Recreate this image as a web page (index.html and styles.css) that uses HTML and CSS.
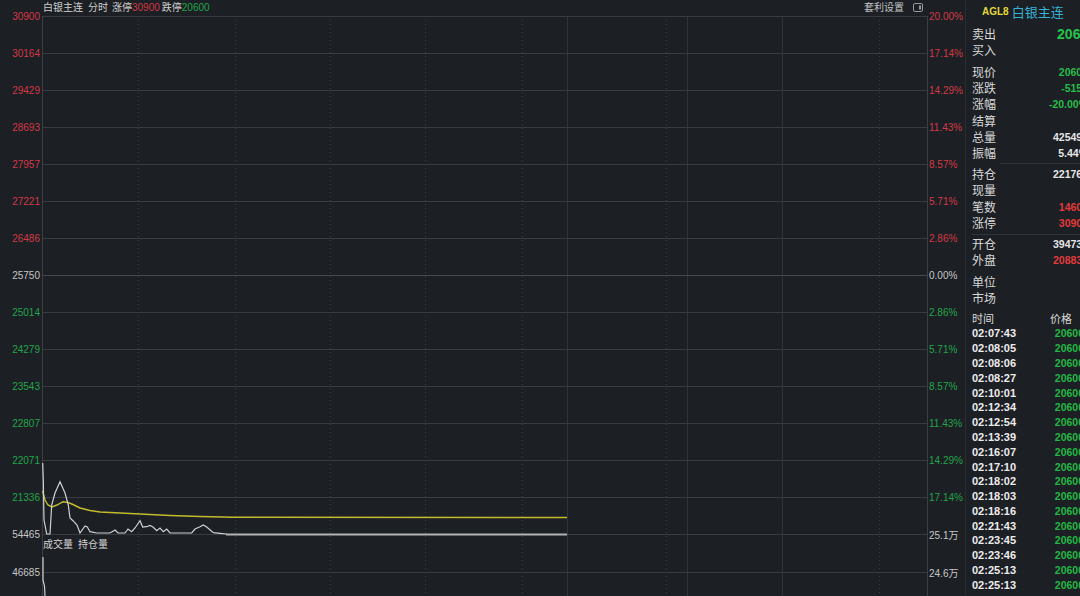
FILE: index.html
```html
<!doctype html>
<html lang="zh-CN">
  <head>
    <meta charset="UTF-8" />
    <title>白银主连 分时</title>
    <link rel="stylesheet" href="styles.css">
  </head>
  <body>
    <div class="screen">
      <section class="main">
        <header class="topbar">
          <div class="title">
            <span class="name">白银主连</span>
            <span class="mode">分时</span>
            <span>涨停</span><span class="up">30900</span>
            <span class="lim">跌停</span><span class="down">20600</span>
          </div>
          <div class="tools">
            <span>套利设置</span>
            <svg class="toggle" width="10" height="9" viewBox="0 0 10 9">
              <rect x="0.5" y="0.5" width="9" height="8" rx="1.5" fill="none" stroke="#9a9a9a" />
              <rect x="6" y="2.5" width="2" height="4" fill="#9a9a9a" />
            </svg>
          </div>
        </header>

        <svg class="chart" width="965" height="581" viewBox="0 15 965 581">
          <!-- vertical grid -->
          <line class="grid-dot" x1="138.5" y1="16" x2="138.5" y2="596" />
          <line class="grid-dot" x1="235.5" y1="16" x2="235.5" y2="596" />
          <line class="grid-dot" x1="330.5" y1="16" x2="330.5" y2="596" />
          <line class="grid-dot" x1="425.5" y1="16" x2="425.5" y2="596" />
          <line class="grid-dot" x1="522.5" y1="16" x2="522.5" y2="596" />
          <line class="grid-dot" x1="666.5" y1="16" x2="666.5" y2="596" />
          <line class="grid-dot" x1="879.5" y1="16" x2="879.5" y2="596" />
          <line class="grid-v" x1="567.5" y1="16" x2="567.5" y2="596" />
          <line class="grid-v" x1="687.5" y1="16" x2="687.5" y2="596" />
          <line class="grid-v" x1="782.5" y1="16" x2="782.5" y2="596" />

          <!-- horizontal grid -->
          <line class="grid-h" x1="42" y1="16.5" x2="927" y2="16.5" />
          <line class="grid-h" x1="42" y1="53.5" x2="927" y2="53.5" />
          <line class="grid-h" x1="42" y1="90.5" x2="927" y2="90.5" />
          <line class="grid-h" x1="42" y1="127.5" x2="927" y2="127.5" />
          <line class="grid-h" x1="42" y1="164.5" x2="927" y2="164.5" />
          <line class="grid-h" x1="42" y1="201.5" x2="927" y2="201.5" />
          <line class="grid-h" x1="42" y1="238.5" x2="927" y2="238.5" />
          <line class="grid-h mid" x1="42" y1="275.5" x2="927" y2="275.5" />
          <line class="grid-h" x1="42" y1="312.5" x2="927" y2="312.5" />
          <line class="grid-h" x1="42" y1="349.5" x2="927" y2="349.5" />
          <line class="grid-h" x1="42" y1="386.5" x2="927" y2="386.5" />
          <line class="grid-h" x1="42" y1="423.5" x2="927" y2="423.5" />
          <line class="grid-h" x1="42" y1="460.5" x2="927" y2="460.5" />
          <line class="grid-h" x1="42" y1="497.5" x2="927" y2="497.5" />
          <line class="grid-h" x1="42" y1="534.5" x2="927" y2="534.5" />
          <line class="grid-h" x1="42" y1="572.5" x2="927" y2="572.5" />

          <!-- axes -->
          <line class="axis" x1="42.5" y1="16" x2="42.5" y2="596" />
          <line class="axis" x1="927.5" y1="16" x2="927.5" y2="596" />

          <!-- left price scale -->
          <g class="ax ax-l">
            <text class="up" x="40" y="16">30900</text>
            <text class="up" x="40" y="53">30164</text>
            <text class="up" x="40" y="90">29429</text>
            <text class="up" x="40" y="127">28693</text>
            <text class="up" x="40" y="164">27957</text>
            <text class="up" x="40" y="201">27221</text>
            <text class="up" x="40" y="238">26486</text>
            <text class="flat" x="40" y="275">25750</text>
            <text class="down" x="40" y="312">25014</text>
            <text class="down" x="40" y="349">24279</text>
            <text class="down" x="40" y="386">23543</text>
            <text class="down" x="40" y="423">22807</text>
            <text class="down" x="40" y="460">22071</text>
            <text class="down" x="40" y="497">21336</text>
            <text class="flat" x="40" y="534">54465</text>
            <text class="flat" x="40" y="572">46685</text>
          </g>

          <!-- right percent scale -->
          <g class="ax ax-r">
            <text class="up" x="929" y="16">20.00%</text>
            <text class="up" x="929" y="53">17.14%</text>
            <text class="up" x="929" y="90">14.29%</text>
            <text class="up" x="929" y="127">11.43%</text>
            <text class="up" x="929" y="164">8.57%</text>
            <text class="up" x="929" y="201">5.71%</text>
            <text class="up" x="929" y="238">2.86%</text>
            <text class="flat" x="929" y="275">0.00%</text>
            <text class="down" x="929" y="312">2.86%</text>
            <text class="down" x="929" y="349">5.71%</text>
            <text class="down" x="929" y="386">8.57%</text>
            <text class="down" x="929" y="423">11.43%</text>
            <text class="down" x="929" y="460">14.29%</text>
            <text class="down" x="929" y="497">17.14%</text>
            <text class="flat" x="929" y="535">25.1万</text>
            <text class="flat" x="929" y="573">24.6万</text>
          </g>

          <!-- average price -->
          <polyline class="avg" points="42.5,490.7 45,500 48,505 52,507 57,505 63,501.7 68,502.5 73,504.5 80,508 90,510.5 100,512 120,513 140,514 170,515.5 200,516.5 233,517.3 567,517.5" />

          <!-- price -->
          <polyline class="price" points="42.7,463 43.3,480 44,520 46.7,534 50,534 51.7,505 55,493 60,481.7 65,493 68.3,505 70,518 73,520.7 77,525 80,533 85,526 87.3,527 90,531.7 96.7,533 110,533 115,530 118,533 125,533 128,529 131.7,531.7 135,528 140,520.7 142.7,527 146.7,526.7 150,525.5 153,527 156.7,530.7 160,528 163.3,531.7 166.7,529 170,533 191.7,533 195,529 200,526.7 203.3,525 206.7,527 213.3,532.7 220,533.3 226.7,534" />
          <line class="price-flat" x1="226" y1="534.5" x2="567" y2="534.5" />

          <!-- volume -->
          <polyline class="price" points="43,557 43,580 44.5,586 45,596" />

          <text class="legend" x="43" y="543">成交量</text>
          <text class="legend" x="78" y="543">持仓量</text>
        </svg>
      </section>

      <aside class="quote">
        <div class="quote-head">
          <span class="code">AGL8</span>
          <span class="cn-name">白银主连</span>
        </div>

        <div class="group g1">
          <div class="row"><span class="k">卖出</span><span class="v big down">20600</span></div>
          <div class="row"><span class="k">买入</span><span class="v"></span></div>
        </div>

        <div class="group g2">
          <div class="row"><span class="k">现价</span><span class="v down">20600</span></div>
          <div class="row"><span class="k">涨跌</span><span class="v down">-5150</span></div>
          <div class="row"><span class="k">涨幅</span><span class="v down">-20.00%</span></div>
          <div class="row"><span class="k">结算</span><span class="v"></span></div>
          <div class="row"><span class="k">总量</span><span class="v">425490</span></div>
          <div class="row"><span class="k">振幅</span><span class="v">5.44%</span></div>
        </div>
        <div class="rule short"></div>

        <div class="group g3">
          <div class="row"><span class="k">持仓</span><span class="v">221768</span></div>
          <div class="row"><span class="k">现量</span><span class="v"></span></div>
          <div class="row"><span class="k">笔数</span><span class="v up">14602</span></div>
          <div class="row"><span class="k">涨停</span><span class="v up">30900</span></div>
        </div>
        <div class="rule"></div>

        <div class="group g4">
          <div class="row"><span class="k">开仓</span><span class="v">394735</span></div>
          <div class="row"><span class="k">外盘</span><span class="v up">208836</span></div>
        </div>

        <div class="group g5">
          <div class="row"><span class="k">单位</span><span class="v"></span></div>
          <div class="row"><span class="k">市场</span><span class="v"></span></div>
        </div>

        <div class="trades-head"><span>时间</span><span>价格</span></div>
        <div class="trades">
          <div class="trade"><span class="t">02:07:43</span><span class="p">20600</span></div>
          <div class="trade"><span class="t">02:08:05</span><span class="p">20600</span></div>
          <div class="trade"><span class="t">02:08:06</span><span class="p">20600</span></div>
          <div class="trade"><span class="t">02:08:27</span><span class="p">20600</span></div>
          <div class="trade"><span class="t">02:10:01</span><span class="p">20600</span></div>
          <div class="trade"><span class="t">02:12:34</span><span class="p">20600</span></div>
          <div class="trade"><span class="t">02:12:54</span><span class="p">20600</span></div>
          <div class="trade"><span class="t">02:13:39</span><span class="p">20600</span></div>
          <div class="trade"><span class="t">02:16:07</span><span class="p">20600</span></div>
          <div class="trade"><span class="t">02:17:10</span><span class="p">20600</span></div>
          <div class="trade"><span class="t">02:18:02</span><span class="p">20600</span></div>
          <div class="trade"><span class="t">02:18:03</span><span class="p">20600</span></div>
          <div class="trade"><span class="t">02:18:16</span><span class="p">20600</span></div>
          <div class="trade"><span class="t">02:21:43</span><span class="p">20600</span></div>
          <div class="trade"><span class="t">02:23:45</span><span class="p">20600</span></div>
          <div class="trade"><span class="t">02:23:46</span><span class="p">20600</span></div>
          <div class="trade"><span class="t">02:25:13</span><span class="p">20600</span></div>
          <div class="trade"><span class="t">02:25:13</span><span class="p">20600</span></div>
          <div class="trade"><span class="t">02:27:08</span><span class="p">20600</span></div>
        </div>
      </aside>
    </div>
  </body>
</html>
```

FILE: styles.css
```css
* {
  box-sizing: border-box;
}
html,
body {
  margin: 0;
  padding: 0;
}
body {
  width: 1080px;
  height: 596px;
  overflow: hidden;
  background-color: #1c1f24;
  color: #d6d6d6;
  font-family: "Liberation Sans", "Noto Sans CJK SC", sans-serif;
}
.screen {
  display: flex;
  width: 1100px; /* value column runs past the window edge */
  height: 596px;
}

/* chart side */
.main {
  width: 965px;
  flex-shrink: 0;
  display: flex;
  flex-direction: column;
}
.topbar {
  height: 15px;
  flex-shrink: 0;
  display: flex;
  justify-content: space-between;
  align-items: center;
  padding: 0 42px 0 43px;
  font-size: 10px;
  line-height: 15px;
  color: #cfcfcf;
}
.title {
  display: flex;
  align-items: center;
}
.title .mode {
  margin: 0 4px 0 5px;
}
.title .lim {
  margin-left: 2px;
}
.up {
  color: #d23a44;
}
.down {
  color: #22a54a;
}
.tools {
  display: flex;
  align-items: center;
  gap: 9px;
  color: #c4c4c4;
}
.toggle {
  display: block;
}
.chart {
  display: block;
  flex-shrink: 0;
  overflow: visible;
}

/* svg parts */
.grid-h {
  stroke: #383b42;
  stroke-width: 1;
}
.grid-h.mid {
  stroke: #44474e;
}
.grid-v {
  stroke: #2f333a;
  stroke-width: 1;
}
.grid-dot {
  stroke: #393c43;
  stroke-width: 1;
  stroke-dasharray: 1 3;
}
.axis {
  stroke: #3c3f46;
  stroke-width: 1;
}
.ax text {
  font-family: "Liberation Sans", "Noto Sans CJK SC", sans-serif;
  font-size: 10px;
  dominant-baseline: central;
}
.ax-l text {
  text-anchor: end;
}
.ax text.up {
  fill: #d23a44;
}
.ax text.down {
  fill: #22a54a;
}
.ax text.flat {
  fill: #c6c6c6;
}
.avg {
  fill: none;
  stroke: #c2bb2c;
  stroke-width: 1.4;
}
.price {
  fill: none;
  stroke: #d0d0d0;
  stroke-width: 1.2;
}
.price-flat {
  stroke: #b4b4b4;
  stroke-width: 2;
}
.legend {
  font-family: "Noto Sans CJK SC", sans-serif;
  font-size: 10px;
  fill: #d4d4d4;
  dominant-baseline: central;
}

/* quote panel */
.quote {
  width: 135px;
  flex-shrink: 0;
  border-left: 1px solid #292c33;
  padding: 0 12px 0 6px;
  display: flex;
  flex-direction: column;
}
.quote > * {
  flex-shrink: 0;
}
.quote-head {
  height: 22px;
  display: flex;
  align-items: center;
  gap: 3px;
  padding-left: 10px;
}
.code {
  color: #e2d93a;
  font-weight: bold;
  font-size: 10px;
}
.cn-name {
  color: #36b3d3;
  font-size: 13px;
  font-family: "Noto Sans CJK SC", sans-serif;
}
.group.g1 {
  padding-top: 4px;
}
.group.g2 {
  padding-top: 5px;
  padding-bottom: 2px;
}
.group.g3 {
  padding-top: 1.5px;
  padding-bottom: 2.5px;
}
.group.g4 {
  padding-top: 1.3px;
}
.group.g5 {
  padding-top: 5.4px;
}
.row {
  display: flex;
  justify-content: space-between;
  align-items: center;
  height: 16.3px;
}
.row .k {
  font-family: "Noto Sans CJK SC", sans-serif;
  font-size: 12px;
  line-height: 16px;
  color: #d8d8d8;
}
.row .v {
  font-size: 10.5px;
  font-weight: bold;
  color: #e6e6e6;
}
.row .v.up {
  color: #e23b3b;
}
.row .v.down {
  color: #24bd48;
}
.row .v.big {
  font-size: 14px;
  margin-right: -8px;
  color: #25c34b;
}
.rule {
  height: 1px;
  background-color: #30343a;
}
.rule.short {
  margin-left: 28px;
}
.trades-head {
  display: flex;
  justify-content: space-between;
  height: 16px;
  margin-top: 3.5px;
  padding-right: 16px;
  font-family: "Noto Sans CJK SC", sans-serif;
  font-size: 11px;
  line-height: 16px;
  color: #d8d8d8;
}
.trade {
  display: flex;
  justify-content: space-between;
  align-items: center;
  height: 14.8px;
  padding-right: 4px;
  font-weight: bold;
}
.trade .t {
  font-size: 11px;
  color: #ececec;
}
.trade .p {
  font-size: 10.5px;
  color: #21b843;
}
```
